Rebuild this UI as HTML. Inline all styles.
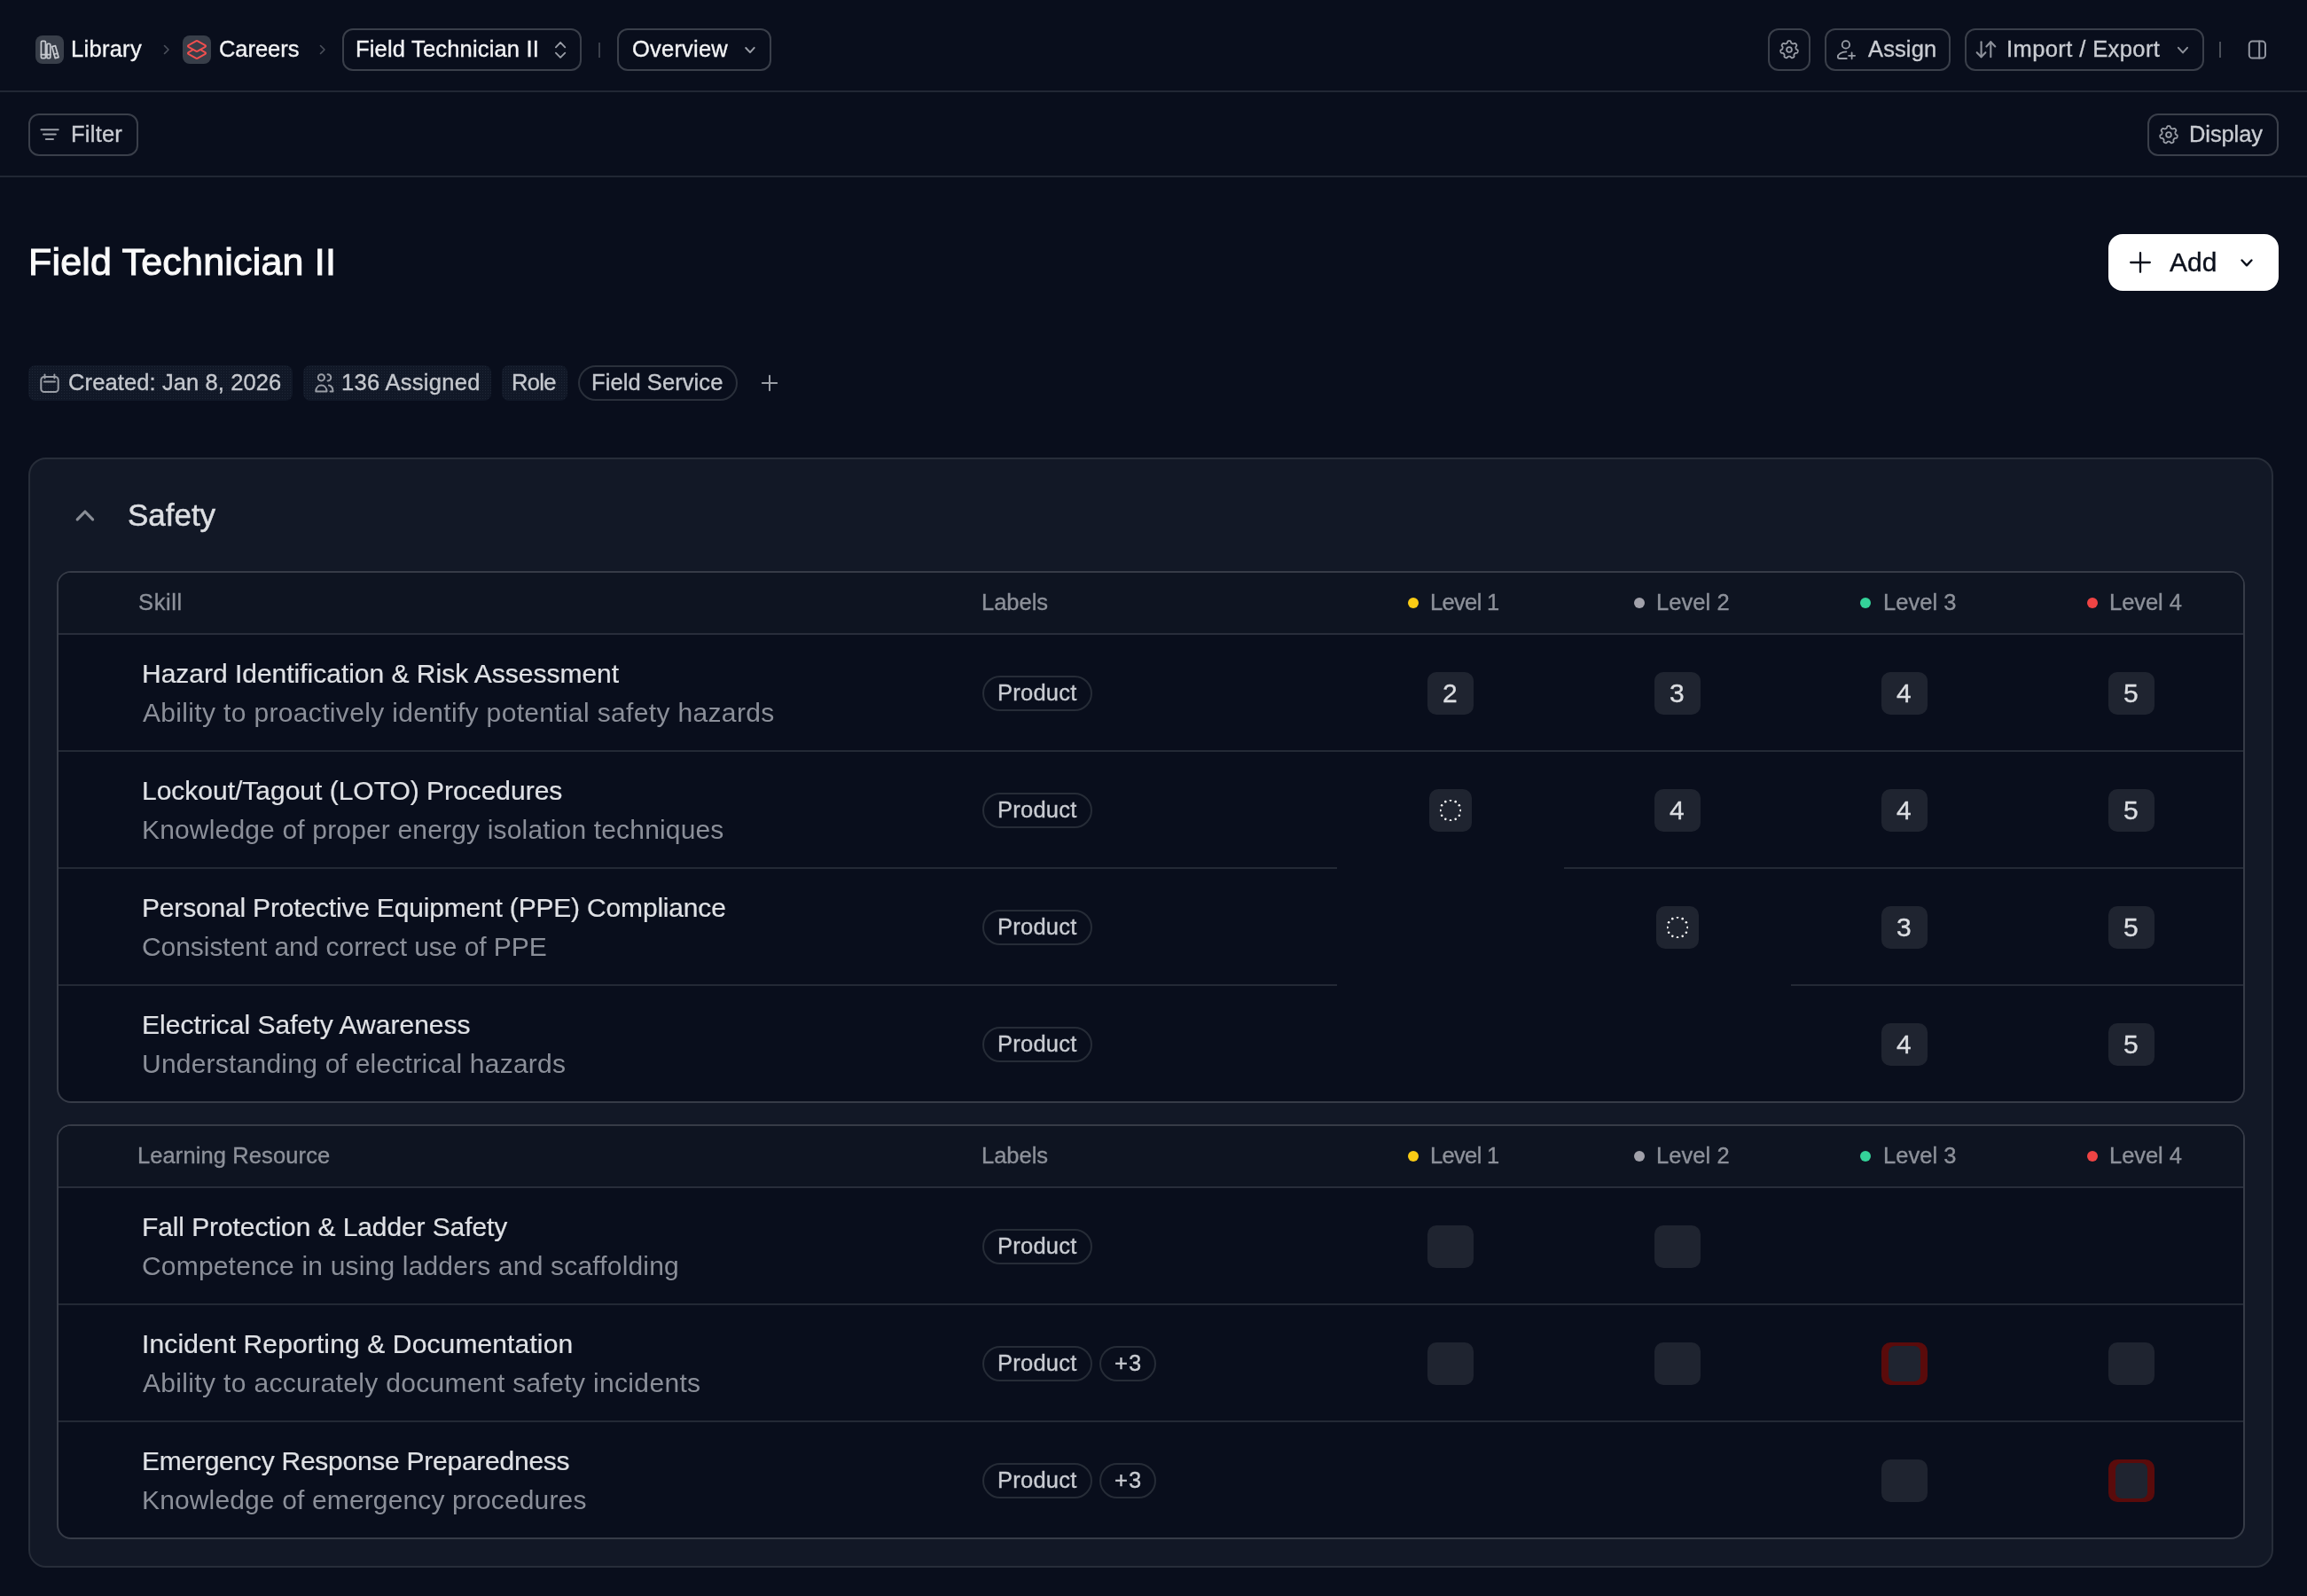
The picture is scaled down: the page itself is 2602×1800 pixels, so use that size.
<!DOCTYPE html>
<html><head><meta charset="utf-8"><title>Field Technician II</title>
<style>
html,body{margin:0;padding:0;}
body{width:2602px;height:1800px;background:#090e1c;position:relative;overflow:hidden;font-family:"Liberation Sans", sans-serif;}
.t{position:absolute;white-space:nowrap;line-height:1;will-change:transform;}
.b{position:absolute;}
@media (max-width: 1400px) and (min-resolution: 1.5dppx) { html{zoom:0.5;} }
</style></head><body>
<div class="b" style="left:0px;top:102px;width:2602px;height:2px;background:#212734"></div>
<div class="b" style="left:40px;top:40px;width:32px;height:32px;background:#383e49;border-radius:8px"></div>
<svg class="b" style="left:40px;top:40px;" width="32" height="32" viewBox="0 0 32 32" fill="none" stroke="#c6c9cf" stroke-width="1.7" stroke-linecap="round" stroke-linejoin="round"><rect x="6.4" y="6.4" width="5" height="19.2" rx="1.2"/><rect x="12.9" y="9.4" width="3.9" height="16.2" rx="1.2"/><path d="M18.6 12.6 L22.4 11.6 L26 24.6 L22.2 25.6 Z"/><path d="M6.4 21.6h5M12.9 21.6h3.9M20.8 21.2l4-1"/></svg>
<div class="t" style="left:80.3px;top:43.00px;letter-spacing:0.283px;font-size:25.5px;color:#f2f3f5;-webkit-text-stroke:0.35px #f2f3f5;">Library</div>
<svg class="b" style="left:180px;top:48px;" width="16" height="16" viewBox="0 0 16 16" fill="none" stroke="#4b505b" stroke-width="1.6" stroke-linecap="round" stroke-linejoin="round"><path d="m5.5 3.5 4.5 4.5-4.5 4.5"/></svg>
<div class="b" style="left:206px;top:40px;width:32px;height:32px;background:#383e49;border-radius:8px"></div>
<svg class="b" style="left:210px;top:44px;" width="24" height="24" viewBox="0 0 24 24" fill="none" stroke="#f04f4f" stroke-width="2" stroke-linecap="round" stroke-linejoin="round"><path d="m16.02 12 5.48 3.13a1 1 0 0 1 0 1.74L13 21.74a2 2 0 0 1-2 0l-8.5-4.87a1 1 0 0 1 0-1.74L7.98 12"/><path d="M13 13.74a2 2 0 0 1-2 0L2.5 8.87a1 1 0 0 1 0-1.74L11 2.26a2 2 0 0 1 2 0l8.5 4.87a1 1 0 0 1 0 1.74Z"/></svg>
<div class="t" style="left:246.7px;top:43.00px;letter-spacing:-0.05px;font-size:25.5px;color:#f2f3f5;-webkit-text-stroke:0.35px #f2f3f5;">Careers</div>
<svg class="b" style="left:356px;top:48px;" width="16" height="16" viewBox="0 0 16 16" fill="none" stroke="#4b505b" stroke-width="1.6" stroke-linecap="round" stroke-linejoin="round"><path d="m5.5 3.5 4.5 4.5-4.5 4.5"/></svg>
<div class="b" style="left:386px;top:32px;width:270px;height:48px;border:2px solid #3a3f4a;border-radius:12px;box-sizing:border-box"></div>
<div class="t" style="left:401.3px;top:43.00px;letter-spacing:0.178px;font-size:25.5px;color:#f2f3f5;-webkit-text-stroke:0.35px #f2f3f5;">Field Technician II</div>
<svg class="b" style="left:620px;top:44px;" width="24" height="24" viewBox="0 0 24 24" fill="none" stroke="#9a9ea7" stroke-width="1.8" stroke-linecap="round" stroke-linejoin="round"><path d="M6.9 9.3 12.1 3.8 17.3 9.3"/><path d="M6.9 15.6 12.1 20.8 17.3 15.6"/></svg>
<div class="b" style="left:675px;top:48px;width:2px;height:17px;background:#3a3f4a"></div>
<div class="b" style="left:696px;top:32px;width:174px;height:48px;border:2px solid #3a3f4a;border-radius:12px;box-sizing:border-box"></div>
<div class="t" style="left:712.5px;top:43.00px;letter-spacing:0.214px;font-size:25.5px;color:#f2f3f5;-webkit-text-stroke:0.35px #f2f3f5;">Overview</div>
<svg class="b" style="left:836px;top:44px;" width="24" height="24" viewBox="0 0 24 24" fill="none" stroke="#9a9ea7" stroke-width="2" stroke-linecap="round" stroke-linejoin="round"><path d="M5.2 10 10 15.1 14.7 9.9"/></svg>
<div class="b" style="left:1994px;top:32px;width:48px;height:48px;border:2px solid #3a3f4a;border-radius:12px;box-sizing:border-box"></div>
<svg class="b" style="left:0;top:0" width="2602" height="1800" fill="none" stroke="#9a9ea7" stroke-width="1.8" stroke-linejoin="round"><path d="M2026.80 56.00 L2027.17 56.21 L2027.46 56.42 L2027.64 56.65 L2027.73 56.88 L2027.77 57.10 L2027.78 57.32 L2027.76 57.55 L2027.73 57.77 L2027.70 57.99 L2027.65 58.20 L2027.60 58.42 L2027.54 58.63 L2027.47 58.84 L2027.38 59.05 L2027.28 59.25 L2027.15 59.43 L2026.96 59.60 L2026.70 59.72 L2026.35 59.79 L2025.93 59.82 L2025.51 59.83 L2025.16 59.85 L2024.91 59.92 L2024.72 60.02 L2024.58 60.13 L2024.46 60.26 L2024.34 60.39 L2024.23 60.53 L2024.13 60.67 L2024.02 60.80 L2023.91 60.94 L2023.80 61.07 L2023.70 61.21 L2023.59 61.35 L2023.49 61.49 L2023.41 61.66 L2023.36 61.86 L2023.35 62.12 L2023.40 62.47 L2023.49 62.88 L2023.56 63.30 L2023.56 63.66 L2023.50 63.94 L2023.38 64.15 L2023.23 64.32 L2023.06 64.47 L2022.88 64.60 L2022.69 64.71 L2022.49 64.82 L2022.30 64.92 L2022.09 65.01 L2021.89 65.10 L2021.68 65.17 L2021.47 65.24 L2021.25 65.28 L2021.02 65.29 L2020.78 65.25 L2020.52 65.13 L2020.24 64.90 L2019.96 64.58 L2019.69 64.26 L2019.45 64.00 L2019.24 63.84 L2019.05 63.76 L2018.87 63.72 L2018.69 63.70 L2018.52 63.70 L2018.35 63.70 L2018.17 63.70 L2018.00 63.70 L2017.83 63.70 L2017.65 63.70 L2017.48 63.70 L2017.31 63.70 L2017.13 63.72 L2016.95 63.76 L2016.76 63.84 L2016.55 64.00 L2016.31 64.26 L2016.04 64.58 L2015.76 64.90 L2015.48 65.13 L2015.22 65.25 L2014.98 65.29 L2014.75 65.28 L2014.53 65.24 L2014.32 65.17 L2014.11 65.10 L2013.91 65.01 L2013.70 64.92 L2013.51 64.82 L2013.31 64.71 L2013.12 64.60 L2012.94 64.47 L2012.77 64.32 L2012.62 64.15 L2012.50 63.94 L2012.44 63.66 L2012.44 63.30 L2012.51 62.88 L2012.60 62.47 L2012.65 62.12 L2012.64 61.86 L2012.59 61.66 L2012.51 61.49 L2012.41 61.35 L2012.30 61.21 L2012.20 61.07 L2012.09 60.94 L2011.98 60.80 L2011.87 60.67 L2011.77 60.53 L2011.66 60.39 L2011.54 60.26 L2011.42 60.13 L2011.28 60.02 L2011.09 59.92 L2010.84 59.85 L2010.49 59.83 L2010.07 59.82 L2009.65 59.79 L2009.30 59.72 L2009.04 59.60 L2008.85 59.43 L2008.72 59.25 L2008.62 59.05 L2008.53 58.84 L2008.46 58.63 L2008.40 58.42 L2008.35 58.20 L2008.30 57.99 L2008.27 57.77 L2008.24 57.55 L2008.22 57.32 L2008.23 57.10 L2008.27 56.88 L2008.36 56.65 L2008.54 56.42 L2008.83 56.21 L2009.20 56.00 L2009.58 55.81 L2009.87 55.64 L2010.08 55.47 L2010.20 55.30 L2010.28 55.13 L2010.33 54.96 L2010.38 54.79 L2010.42 54.62 L2010.46 54.46 L2010.49 54.29 L2010.53 54.12 L2010.57 53.95 L2010.61 53.78 L2010.64 53.61 L2010.67 53.43 L2010.67 53.25 L2010.63 53.04 L2010.52 52.80 L2010.33 52.52 L2010.07 52.18 L2009.83 51.84 L2009.66 51.51 L2009.60 51.23 L2009.61 50.99 L2009.68 50.77 L2009.77 50.57 L2009.88 50.37 L2010.00 50.18 L2010.12 50.00 L2010.26 49.83 L2010.40 49.66 L2010.55 49.49 L2010.70 49.33 L2010.87 49.18 L2011.05 49.05 L2011.25 48.94 L2011.48 48.87 L2011.77 48.87 L2012.12 48.96 L2012.51 49.12 L2012.90 49.30 L2013.22 49.42 L2013.48 49.47 L2013.69 49.46 L2013.87 49.42 L2014.03 49.36 L2014.19 49.29 L2014.35 49.21 L2014.50 49.14 L2014.66 49.06 L2014.81 48.99 L2014.97 48.91 L2015.13 48.84 L2015.28 48.76 L2015.43 48.67 L2015.58 48.55 L2015.72 48.39 L2015.84 48.16 L2015.94 47.83 L2016.04 47.42 L2016.16 47.01 L2016.31 46.69 L2016.49 46.46 L2016.69 46.32 L2016.90 46.23 L2017.12 46.17 L2017.34 46.14 L2017.56 46.12 L2017.78 46.10 L2018.00 46.10 L2018.22 46.10 L2018.44 46.12 L2018.66 46.14 L2018.88 46.17 L2019.10 46.23 L2019.31 46.32 L2019.51 46.46 L2019.69 46.69 L2019.84 47.01 L2019.96 47.42 L2020.06 47.83 L2020.16 48.16 L2020.28 48.39 L2020.42 48.55 L2020.57 48.67 L2020.72 48.76 L2020.87 48.84 L2021.03 48.91 L2021.19 48.99 L2021.34 49.06 L2021.50 49.14 L2021.65 49.21 L2021.81 49.29 L2021.97 49.36 L2022.13 49.42 L2022.31 49.46 L2022.52 49.47 L2022.78 49.42 L2023.10 49.30 L2023.49 49.12 L2023.88 48.96 L2024.23 48.87 L2024.52 48.87 L2024.75 48.94 L2024.95 49.05 L2025.13 49.18 L2025.30 49.33 L2025.45 49.49 L2025.60 49.66 L2025.74 49.83 L2025.88 50.00 L2026.00 50.18 L2026.12 50.37 L2026.23 50.57 L2026.32 50.77 L2026.39 50.99 L2026.40 51.23 L2026.34 51.51 L2026.17 51.84 L2025.93 52.18 L2025.67 52.52 L2025.48 52.80 L2025.37 53.04 L2025.33 53.25 L2025.33 53.43 L2025.36 53.61 L2025.39 53.78 L2025.43 53.95 L2025.47 54.12 L2025.51 54.29 L2025.54 54.46 L2025.58 54.62 L2025.62 54.79 L2025.67 54.96 L2025.72 55.13 L2025.80 55.30 L2025.92 55.47 L2026.13 55.64 L2026.42 55.81 L2026.80 56.00Z"/><circle cx="2018" cy="56" r="2.9"/></svg>
<div class="b" style="left:2058px;top:32px;width:142px;height:48px;border:2px solid #3a3f4a;border-radius:12px;box-sizing:border-box"></div>
<svg class="b" style="left:2070px;top:44px;" width="24" height="24" viewBox="0 0 24 24" fill="none" stroke="#9a9ea7" stroke-width="1.8" stroke-linecap="round" stroke-linejoin="round"><circle cx="11.9" cy="6.4" r="4.2"/><path d="M12.4 14.4C6.8 14.4 2.8 17.4 2.8 20C2.8 21.3 3.6 22 5 22L12.8 22"/><path d="M18.6 15.3v7M15.1 18.8h7"/></svg>
<div class="t" style="left:2107.2px;top:43.00px;letter-spacing:0.12px;font-size:25.5px;color:#c9ccd2;-webkit-text-stroke:0.35px #c9ccd2;">Assign</div>
<div class="b" style="left:2216px;top:32px;width:270px;height:48px;border:2px solid #3a3f4a;border-radius:12px;box-sizing:border-box"></div>
<svg class="b" style="left:2222px;top:40px;" width="32" height="32" viewBox="0 0 32 32" fill="none" stroke="#8e929b" stroke-width="2.1" stroke-linecap="round" stroke-linejoin="round"><path d="M7.7 19.2 12.6 24.3 17.4 19.2"/><path d="M12.6 24.3V7.2"/><path d="M18.4 12.4 23.3 7.3 28.3 12.4"/><path d="M23.3 7.3V24.3"/></svg>
<div class="t" style="left:2263.3px;top:43.00px;letter-spacing:0.407px;font-size:25.5px;color:#c9ccd2;-webkit-text-stroke:0.35px #c9ccd2;">Import / Export</div>
<svg class="b" style="left:2440px;top:40px;" width="32" height="32" viewBox="0 0 32 32" fill="none" stroke="#8e929b" stroke-width="2" stroke-linecap="round" stroke-linejoin="round"><path d="M16.9 13.8 22 19.4 27 13.8"/></svg>
<div class="b" style="left:2503px;top:47px;width:2px;height:18px;background:#4a4f59"></div>
<svg class="b" style="left:2530px;top:40px;" width="32" height="32" viewBox="0 0 32 32" fill="none" stroke="#9296a0" stroke-width="2" stroke-linecap="round" stroke-linejoin="round"><rect x="6.8" y="6.6" width="18.2" height="18.9" rx="3.6"/><path d="M18.2 6.6v18.9"/></svg>
<div class="b" style="left:0px;top:198px;width:2602px;height:2px;background:#212734"></div>
<div class="b" style="left:32px;top:128px;width:124px;height:48px;border:2px solid #3a3f4a;border-radius:12px;box-sizing:border-box"></div>
<svg class="b" style="left:40px;top:136px;" width="32" height="32" viewBox="0 0 32 32" fill="none" stroke="#9a9ea6" stroke-width="2" stroke-linecap="round" stroke-linejoin="round"><path d="M6.4 10.3h19.3"/><path d="M9 15.6h13.8"/><path d="M11.8 21h8.2"/></svg>
<div class="t" style="left:80.4px;top:139.00px;letter-spacing:0.24px;font-size:25.5px;color:#c9ccd2;-webkit-text-stroke:0.35px #c9ccd2;">Filter</div>
<div class="b" style="left:2422px;top:128px;width:148px;height:48px;border:2px solid #3a3f4a;border-radius:12px;box-sizing:border-box"></div>
<svg class="b" style="left:0;top:0" width="2602" height="1800" fill="none" stroke="#9a9ea7" stroke-width="1.8" stroke-linejoin="round"><path d="M2454.80 152.00 L2455.17 152.21 L2455.46 152.42 L2455.64 152.65 L2455.73 152.88 L2455.77 153.10 L2455.78 153.32 L2455.76 153.55 L2455.73 153.77 L2455.70 153.99 L2455.65 154.20 L2455.60 154.42 L2455.54 154.63 L2455.47 154.84 L2455.38 155.05 L2455.28 155.25 L2455.15 155.43 L2454.96 155.60 L2454.70 155.72 L2454.35 155.79 L2453.93 155.82 L2453.51 155.83 L2453.16 155.85 L2452.91 155.92 L2452.72 156.02 L2452.58 156.13 L2452.46 156.26 L2452.34 156.39 L2452.23 156.53 L2452.13 156.67 L2452.02 156.80 L2451.91 156.94 L2451.80 157.07 L2451.70 157.21 L2451.59 157.35 L2451.49 157.49 L2451.41 157.66 L2451.36 157.86 L2451.35 158.12 L2451.40 158.47 L2451.49 158.88 L2451.56 159.30 L2451.56 159.66 L2451.50 159.94 L2451.38 160.15 L2451.23 160.32 L2451.06 160.47 L2450.88 160.60 L2450.69 160.71 L2450.49 160.82 L2450.30 160.92 L2450.09 161.01 L2449.89 161.10 L2449.68 161.17 L2449.47 161.24 L2449.25 161.28 L2449.02 161.29 L2448.78 161.25 L2448.52 161.13 L2448.24 160.90 L2447.96 160.58 L2447.69 160.26 L2447.45 160.00 L2447.24 159.84 L2447.05 159.76 L2446.87 159.72 L2446.69 159.70 L2446.52 159.70 L2446.35 159.70 L2446.17 159.70 L2446.00 159.70 L2445.83 159.70 L2445.65 159.70 L2445.48 159.70 L2445.31 159.70 L2445.13 159.72 L2444.95 159.76 L2444.76 159.84 L2444.55 160.00 L2444.31 160.26 L2444.04 160.58 L2443.76 160.90 L2443.48 161.13 L2443.22 161.25 L2442.98 161.29 L2442.75 161.28 L2442.53 161.24 L2442.32 161.17 L2442.11 161.10 L2441.91 161.01 L2441.70 160.92 L2441.51 160.82 L2441.31 160.71 L2441.12 160.60 L2440.94 160.47 L2440.77 160.32 L2440.62 160.15 L2440.50 159.94 L2440.44 159.66 L2440.44 159.30 L2440.51 158.88 L2440.60 158.47 L2440.65 158.12 L2440.64 157.86 L2440.59 157.66 L2440.51 157.49 L2440.41 157.35 L2440.30 157.21 L2440.20 157.07 L2440.09 156.94 L2439.98 156.80 L2439.87 156.67 L2439.77 156.53 L2439.66 156.39 L2439.54 156.26 L2439.42 156.13 L2439.28 156.02 L2439.09 155.92 L2438.84 155.85 L2438.49 155.83 L2438.07 155.82 L2437.65 155.79 L2437.30 155.72 L2437.04 155.60 L2436.85 155.43 L2436.72 155.25 L2436.62 155.05 L2436.53 154.84 L2436.46 154.63 L2436.40 154.42 L2436.35 154.20 L2436.30 153.99 L2436.27 153.77 L2436.24 153.55 L2436.22 153.32 L2436.23 153.10 L2436.27 152.88 L2436.36 152.65 L2436.54 152.42 L2436.83 152.21 L2437.20 152.00 L2437.58 151.81 L2437.87 151.64 L2438.08 151.47 L2438.20 151.30 L2438.28 151.13 L2438.33 150.96 L2438.38 150.79 L2438.42 150.62 L2438.46 150.46 L2438.49 150.29 L2438.53 150.12 L2438.57 149.95 L2438.61 149.78 L2438.64 149.61 L2438.67 149.43 L2438.67 149.25 L2438.63 149.04 L2438.52 148.80 L2438.33 148.52 L2438.07 148.18 L2437.83 147.84 L2437.66 147.51 L2437.60 147.23 L2437.61 146.99 L2437.68 146.77 L2437.77 146.57 L2437.88 146.37 L2438.00 146.18 L2438.12 146.00 L2438.26 145.83 L2438.40 145.66 L2438.55 145.49 L2438.70 145.33 L2438.87 145.18 L2439.05 145.05 L2439.25 144.94 L2439.48 144.87 L2439.77 144.87 L2440.12 144.96 L2440.51 145.12 L2440.90 145.30 L2441.22 145.42 L2441.48 145.47 L2441.69 145.46 L2441.87 145.42 L2442.03 145.36 L2442.19 145.29 L2442.35 145.21 L2442.50 145.14 L2442.66 145.06 L2442.81 144.99 L2442.97 144.91 L2443.13 144.84 L2443.28 144.76 L2443.43 144.67 L2443.58 144.55 L2443.72 144.39 L2443.84 144.16 L2443.94 143.83 L2444.04 143.42 L2444.16 143.01 L2444.31 142.69 L2444.49 142.46 L2444.69 142.32 L2444.90 142.23 L2445.12 142.17 L2445.34 142.14 L2445.56 142.12 L2445.78 142.10 L2446.00 142.10 L2446.22 142.10 L2446.44 142.12 L2446.66 142.14 L2446.88 142.17 L2447.10 142.23 L2447.31 142.32 L2447.51 142.46 L2447.69 142.69 L2447.84 143.01 L2447.96 143.42 L2448.06 143.83 L2448.16 144.16 L2448.28 144.39 L2448.42 144.55 L2448.57 144.67 L2448.72 144.76 L2448.87 144.84 L2449.03 144.91 L2449.19 144.99 L2449.34 145.06 L2449.50 145.14 L2449.65 145.21 L2449.81 145.29 L2449.97 145.36 L2450.13 145.42 L2450.31 145.46 L2450.52 145.47 L2450.78 145.42 L2451.10 145.30 L2451.49 145.12 L2451.88 144.96 L2452.23 144.87 L2452.52 144.87 L2452.75 144.94 L2452.95 145.05 L2453.13 145.18 L2453.30 145.33 L2453.45 145.49 L2453.60 145.66 L2453.74 145.83 L2453.88 146.00 L2454.00 146.18 L2454.12 146.37 L2454.23 146.57 L2454.32 146.77 L2454.39 146.99 L2454.40 147.23 L2454.34 147.51 L2454.17 147.84 L2453.93 148.18 L2453.67 148.52 L2453.48 148.80 L2453.37 149.04 L2453.33 149.25 L2453.33 149.43 L2453.36 149.61 L2453.39 149.78 L2453.43 149.95 L2453.47 150.12 L2453.51 150.29 L2453.54 150.46 L2453.58 150.62 L2453.62 150.79 L2453.67 150.96 L2453.72 151.13 L2453.80 151.30 L2453.92 151.47 L2454.13 151.64 L2454.42 151.81 L2454.80 152.00Z"/><circle cx="2446" cy="152" r="2.9"/></svg>
<div class="t" style="left:2469.4px;top:139.00px;letter-spacing:-0.1px;font-size:25.5px;color:#c9ccd2;-webkit-text-stroke:0.35px #c9ccd2;">Display</div>
<div class="t" style="left:31.5px;top:274.00px;letter-spacing:0.194px;font-size:43px;color:#fafafa;-webkit-text-stroke:1px #fafafa;">Field Technician II</div>
<div class="b" style="left:2378px;top:264px;width:192px;height:64px;background:#ffffff;border-radius:16px"></div>
<svg class="b" style="left:2402px;top:284px;" width="24" height="24" viewBox="0 0 24 24" fill="none" stroke="#0b101c" stroke-width="2.3" stroke-linecap="round" stroke-linejoin="round"><path d="M12 1.2v21.6M1.2 12h21.6"/></svg>
<div class="t" style="left:2446.5px;top:281.00px;letter-spacing:0.0px;font-size:30px;color:#0b101c;-webkit-text-stroke:0.35px #0b101c;">Add</div>
<svg class="b" style="left:2518px;top:281px;" width="32" height="32" viewBox="0 0 32 32" fill="none" stroke="#0b101c" stroke-width="2.4" stroke-linecap="round" stroke-linejoin="round"><path d="M10.5 12.5 16 18.3 21.5 12.5"/></svg>
<div class="b" style="left:32px;top:412px;width:298px;height:40px;background:#111827;background-image:radial-gradient(circle at 1.5px 1.5px, rgba(160,170,190,0.10) 0.6px, transparent 0.9px);background-size:3px 3px;border-radius:8px"></div>
<svg class="b" style="left:40px;top:416px;" width="32" height="32" viewBox="0 0 32 32" fill="none" stroke="#9a9ea6" stroke-width="2" stroke-linecap="round" stroke-linejoin="round"><rect x="6.3" y="9" width="19.4" height="17" rx="3.5"/><path d="M10.5 6.6v3.8M21.4 6.6v3.8M9.9 14.4h12.1"/></svg>
<div class="t" style="left:77.0px;top:419.00px;letter-spacing:0.111px;font-size:25.5px;color:#c5c8ce;-webkit-text-stroke:0.35px #c5c8ce;">Created: Jan 8, 2026</div>
<div class="b" style="left:342px;top:412px;width:212px;height:40px;background:#111827;background-image:radial-gradient(circle at 1.5px 1.5px, rgba(160,170,190,0.10) 0.6px, transparent 0.9px);background-size:3px 3px;border-radius:8px"></div>
<svg class="b" style="left:350px;top:416px;" width="32" height="32" viewBox="0 0 32 32" fill="none" stroke="#9a9ea6" stroke-width="2" stroke-linecap="round" stroke-linejoin="round"><circle cx="12.4" cy="9.8" r="3.6"/><path d="M19.6 6.2a3.6 3.6 0 0 1 0 7.3"/><path d="M6.3 25.5C6.3 21.5 8.8 18.6 12.4 18.6S18.5 21.5 18.5 25.5Z"/><path d="M20.9 18.6C23.6 19.2 25.5 21.6 25.5 25.5H22.5"/></svg>
<div class="t" style="left:385.3px;top:419.00px;letter-spacing:0.291px;font-size:25.5px;color:#c5c8ce;-webkit-text-stroke:0.35px #c5c8ce;">136 Assigned</div>
<div class="b" style="left:566px;top:412px;width:74px;height:40px;background:#111827;background-image:radial-gradient(circle at 1.5px 1.5px, rgba(160,170,190,0.10) 0.6px, transparent 0.9px);background-size:3px 3px;border-radius:8px"></div>
<div class="t" style="left:577.0px;top:419.00px;letter-spacing:-0.667px;font-size:25.5px;color:#c5c8ce;-webkit-text-stroke:0.35px #c5c8ce;">Role</div>
<div class="b" style="left:652px;top:412px;width:180px;height:40px;border:2px solid #2a303b;border-radius:20px;box-sizing:border-box"></div>
<div class="t" style="left:667.0px;top:419.00px;letter-spacing:0.083px;font-size:25.5px;color:#c5c8ce;-webkit-text-stroke:0.35px #c5c8ce;">Field Service</div>
<svg class="b" style="left:852px;top:416px;" width="32" height="32" viewBox="0 0 32 32" fill="none" stroke="#9a9ea6" stroke-width="2" stroke-linecap="round" stroke-linejoin="round"><path d="M16 7.8v16.4M7.8 16h16.4"/></svg>
<div class="b" style="left:32px;top:516px;width:2532px;height:1252px;background:#121826;border:2px solid #272d39;border-radius:20px;box-sizing:border-box"></div>
<svg class="b" style="left:78px;top:565px;" width="32" height="32" viewBox="0 0 32 32" fill="none" stroke="#8a8e97" stroke-width="3.2" stroke-linecap="round" stroke-linejoin="round"><path d="M9.2 20.8 17.9 12 26.6 20.8"/></svg>
<div class="t" style="left:144.0px;top:563.00px;letter-spacing:-0.02px;font-size:35px;color:#dcdee2;-webkit-text-stroke:0.55px #dcdee2;">Safety</div>
<div class="b" style="left:64px;top:644px;width:2468px;height:600px;background:#090e1c;border:2px solid #363b47;border-radius:16px;box-sizing:border-box;overflow:hidden"></div>
<div class="b" style="left:66px;top:646px;width:2464px;height:68px;background:#0e1421;border-radius:14px 14px 0 0"></div>
<div class="b" style="left:66px;top:714px;width:2464px;height:2px;background:#282d3a"></div>
<div class="t" style="left:155.7px;top:667.00px;letter-spacing:0.625px;font-size:25.5px;color:#8d919a;-webkit-text-stroke:0.35px #8d919a;">Skill</div>
<div class="t" style="left:1107.3px;top:667.00px;letter-spacing:-0.02px;font-size:25.5px;color:#8d919a;-webkit-text-stroke:0.35px #8d919a;">Labels</div>
<div class="b" style="left:1588px;top:674px;width:12px;height:12px;background:#facc15;border-radius:50%"></div>
<div class="t" style="left:1613.3px;top:667.00px;letter-spacing:-0.667px;font-size:25.5px;color:#8d919a;-webkit-text-stroke:0.35px #8d919a;">Level 1</div>
<div class="b" style="left:1843px;top:674px;width:12px;height:12px;background:#a1a1aa;border-radius:50%"></div>
<div class="t" style="left:1868.2px;top:667.00px;letter-spacing:0.067px;font-size:25.5px;color:#8d919a;-webkit-text-stroke:0.35px #8d919a;">Level 2</div>
<div class="b" style="left:2098px;top:674px;width:12px;height:12px;background:#34d399;border-radius:50%"></div>
<div class="t" style="left:2123.6px;top:667.00px;letter-spacing:0.05px;font-size:25.5px;color:#8d919a;-webkit-text-stroke:0.35px #8d919a;">Level 3</div>
<div class="b" style="left:2354px;top:674px;width:12px;height:12px;background:#ef4444;border-radius:50%"></div>
<div class="t" style="left:2379.3px;top:667.00px;letter-spacing:-0.05px;font-size:25.5px;color:#8d919a;-webkit-text-stroke:0.35px #8d919a;">Level 4</div>
<div class="t" style="left:159.7px;top:745.00px;letter-spacing:-0.013px;font-size:30px;color:#dfe1e5;-webkit-text-stroke:0.2px #dfe1e5;">Hazard Identification &amp; Risk Assessment</div>
<div class="t" style="left:160.75px;top:789.00px;letter-spacing:0.337px;font-size:30px;color:#8b8f99;">Ability to proactively identify potential safety hazards</div>
<div class="b" style="left:1108px;top:762px;width:124px;height:40px;border:2px solid #262c37;border-radius:20px;box-sizing:border-box"></div>
<div class="t" style="left:1124.5px;top:769.00px;letter-spacing:0.25px;font-size:25.5px;color:#c9ccd2;-webkit-text-stroke:0.35px #c9ccd2;">Product</div>
<div class="b" style="left:1610px;top:758px;width:52px;height:48px;background:#1f2430;border-radius:10px"></div>
<div class="t" style="left:1626.8px;top:767.00px;letter-spacing:0px;font-size:30px;color:#dcdee2;-webkit-text-stroke:0.35px #dcdee2;">2</div>
<div class="b" style="left:1866px;top:758px;width:52px;height:48px;background:#1f2430;border-radius:10px"></div>
<div class="t" style="left:1882.8px;top:767.00px;letter-spacing:0px;font-size:30px;color:#dcdee2;-webkit-text-stroke:0.35px #dcdee2;">3</div>
<div class="b" style="left:2122px;top:758px;width:52px;height:48px;background:#1f2430;border-radius:10px"></div>
<div class="t" style="left:2138.8px;top:767.00px;letter-spacing:0px;font-size:30px;color:#dcdee2;-webkit-text-stroke:0.35px #dcdee2;">4</div>
<div class="b" style="left:2378px;top:758px;width:52px;height:48px;background:#1f2430;border-radius:10px"></div>
<div class="t" style="left:2394.8px;top:767.00px;letter-spacing:0px;font-size:30px;color:#dcdee2;-webkit-text-stroke:0.35px #dcdee2;">5</div>
<div class="b" style="left:66px;top:846px;width:2464px;height:2px;background:#232935"></div>
<div class="t" style="left:159.7px;top:877.00px;letter-spacing:-0.01px;font-size:30px;color:#dfe1e5;-webkit-text-stroke:0.2px #dfe1e5;">Lockout/Tagout (LOTO) Procedures</div>
<div class="t" style="left:159.8px;top:921.00px;letter-spacing:0.165px;font-size:30px;color:#8b8f99;">Knowledge of proper energy isolation techniques</div>
<div class="b" style="left:1108px;top:894px;width:124px;height:40px;border:2px solid #262c37;border-radius:20px;box-sizing:border-box"></div>
<div class="t" style="left:1124.5px;top:901.00px;letter-spacing:0.25px;font-size:25.5px;color:#c9ccd2;-webkit-text-stroke:0.35px #c9ccd2;">Product</div>
<div class="b" style="left:1612px;top:890px;width:48px;height:48px;background:#1f2430;border-radius:10px"></div>
<svg class="b" style="left:1624px;top:902px" width="24" height="24" viewBox="0 0 24 24"><circle cx="23.40" cy="12.00" r="1.3" fill="#f5f5f5"/><circle cx="21.87" cy="17.70" r="1.3" fill="#f5f5f5"/><circle cx="17.70" cy="21.87" r="1.3" fill="#f5f5f5"/><circle cx="12.00" cy="23.40" r="1.3" fill="#f5f5f5"/><circle cx="6.30" cy="21.87" r="1.3" fill="#f5f5f5"/><circle cx="2.13" cy="17.70" r="1.3" fill="#f5f5f5"/><circle cx="0.60" cy="12.00" r="1.3" fill="#f5f5f5"/><circle cx="2.13" cy="6.30" r="1.3" fill="#f5f5f5"/><circle cx="6.30" cy="2.13" r="1.3" fill="#f5f5f5"/><circle cx="12.00" cy="0.60" r="1.3" fill="#f5f5f5"/><circle cx="17.70" cy="2.13" r="1.3" fill="#f5f5f5"/><circle cx="21.87" cy="6.30" r="1.3" fill="#f5f5f5"/></svg>
<div class="b" style="left:1866px;top:890px;width:52px;height:48px;background:#1f2430;border-radius:10px"></div>
<div class="t" style="left:1882.8px;top:899.00px;letter-spacing:0px;font-size:30px;color:#dcdee2;-webkit-text-stroke:0.35px #dcdee2;">4</div>
<div class="b" style="left:2122px;top:890px;width:52px;height:48px;background:#1f2430;border-radius:10px"></div>
<div class="t" style="left:2138.8px;top:899.00px;letter-spacing:0px;font-size:30px;color:#dcdee2;-webkit-text-stroke:0.35px #dcdee2;">4</div>
<div class="b" style="left:2378px;top:890px;width:52px;height:48px;background:#1f2430;border-radius:10px"></div>
<div class="t" style="left:2394.8px;top:899.00px;letter-spacing:0px;font-size:30px;color:#dcdee2;-webkit-text-stroke:0.35px #dcdee2;">5</div>
<div class="b" style="left:66px;top:978px;width:1442px;height:2px;background:#232935"></div>
<div class="b" style="left:1764px;top:978px;width:766px;height:2px;background:#232935"></div>
<div class="t" style="left:159.7px;top:1009.00px;letter-spacing:-0.18px;font-size:30px;color:#dfe1e5;-webkit-text-stroke:0.2px #dfe1e5;">Personal Protective Equipment (PPE) Compliance</div>
<div class="t" style="left:160.3px;top:1053.00px;letter-spacing:-0.056px;font-size:30px;color:#8b8f99;">Consistent and correct use of PPE</div>
<div class="b" style="left:1108px;top:1026px;width:124px;height:40px;border:2px solid #262c37;border-radius:20px;box-sizing:border-box"></div>
<div class="t" style="left:1124.5px;top:1033.00px;letter-spacing:0.25px;font-size:25.5px;color:#c9ccd2;-webkit-text-stroke:0.35px #c9ccd2;">Product</div>
<div class="b" style="left:1868px;top:1022px;width:48px;height:48px;background:#1f2430;border-radius:10px"></div>
<svg class="b" style="left:1880px;top:1034px" width="24" height="24" viewBox="0 0 24 24"><circle cx="23.40" cy="12.00" r="1.3" fill="#f5f5f5"/><circle cx="21.87" cy="17.70" r="1.3" fill="#f5f5f5"/><circle cx="17.70" cy="21.87" r="1.3" fill="#f5f5f5"/><circle cx="12.00" cy="23.40" r="1.3" fill="#f5f5f5"/><circle cx="6.30" cy="21.87" r="1.3" fill="#f5f5f5"/><circle cx="2.13" cy="17.70" r="1.3" fill="#f5f5f5"/><circle cx="0.60" cy="12.00" r="1.3" fill="#f5f5f5"/><circle cx="2.13" cy="6.30" r="1.3" fill="#f5f5f5"/><circle cx="6.30" cy="2.13" r="1.3" fill="#f5f5f5"/><circle cx="12.00" cy="0.60" r="1.3" fill="#f5f5f5"/><circle cx="17.70" cy="2.13" r="1.3" fill="#f5f5f5"/><circle cx="21.87" cy="6.30" r="1.3" fill="#f5f5f5"/></svg>
<div class="b" style="left:2122px;top:1022px;width:52px;height:48px;background:#1f2430;border-radius:10px"></div>
<div class="t" style="left:2138.8px;top:1031.00px;letter-spacing:0px;font-size:30px;color:#dcdee2;-webkit-text-stroke:0.35px #dcdee2;">3</div>
<div class="b" style="left:2378px;top:1022px;width:52px;height:48px;background:#1f2430;border-radius:10px"></div>
<div class="t" style="left:2394.8px;top:1031.00px;letter-spacing:0px;font-size:30px;color:#dcdee2;-webkit-text-stroke:0.35px #dcdee2;">5</div>
<div class="b" style="left:66px;top:1110px;width:1442px;height:2px;background:#232935"></div>
<div class="b" style="left:2020px;top:1110px;width:510px;height:2px;background:#232935"></div>
<div class="t" style="left:159.7px;top:1141.00px;letter-spacing:0.038px;font-size:30px;color:#dfe1e5;-webkit-text-stroke:0.2px #dfe1e5;">Electrical Safety Awareness</div>
<div class="t" style="left:159.8px;top:1185.00px;letter-spacing:0.226px;font-size:30px;color:#8b8f99;">Understanding of electrical hazards</div>
<div class="b" style="left:1108px;top:1158px;width:124px;height:40px;border:2px solid #262c37;border-radius:20px;box-sizing:border-box"></div>
<div class="t" style="left:1124.5px;top:1165.00px;letter-spacing:0.25px;font-size:25.5px;color:#c9ccd2;-webkit-text-stroke:0.35px #c9ccd2;">Product</div>
<div class="b" style="left:2122px;top:1154px;width:52px;height:48px;background:#1f2430;border-radius:10px"></div>
<div class="t" style="left:2138.8px;top:1163.00px;letter-spacing:0px;font-size:30px;color:#dcdee2;-webkit-text-stroke:0.35px #dcdee2;">4</div>
<div class="b" style="left:2378px;top:1154px;width:52px;height:48px;background:#1f2430;border-radius:10px"></div>
<div class="t" style="left:2394.8px;top:1163.00px;letter-spacing:0px;font-size:30px;color:#dcdee2;-webkit-text-stroke:0.35px #dcdee2;">5</div>
<div class="b" style="left:64px;top:1268px;width:2468px;height:468px;background:#090e1c;border:2px solid #363b47;border-radius:16px;box-sizing:border-box;overflow:hidden"></div>
<div class="b" style="left:66px;top:1270px;width:2464px;height:68px;background:#0e1421;border-radius:14px 14px 0 0"></div>
<div class="b" style="left:66px;top:1338px;width:2464px;height:2px;background:#282d3a"></div>
<div class="t" style="left:155.3px;top:1291.00px;letter-spacing:0.106px;font-size:25.5px;color:#8d919a;-webkit-text-stroke:0.35px #8d919a;">Learning Resource</div>
<div class="t" style="left:1107.3px;top:1291.00px;letter-spacing:-0.02px;font-size:25.5px;color:#8d919a;-webkit-text-stroke:0.35px #8d919a;">Labels</div>
<div class="b" style="left:1588px;top:1298px;width:12px;height:12px;background:#facc15;border-radius:50%"></div>
<div class="t" style="left:1613.3px;top:1291.00px;letter-spacing:-0.667px;font-size:25.5px;color:#8d919a;-webkit-text-stroke:0.35px #8d919a;">Level 1</div>
<div class="b" style="left:1843px;top:1298px;width:12px;height:12px;background:#a1a1aa;border-radius:50%"></div>
<div class="t" style="left:1868.2px;top:1291.00px;letter-spacing:0.067px;font-size:25.5px;color:#8d919a;-webkit-text-stroke:0.35px #8d919a;">Level 2</div>
<div class="b" style="left:2098px;top:1298px;width:12px;height:12px;background:#34d399;border-radius:50%"></div>
<div class="t" style="left:2123.6px;top:1291.00px;letter-spacing:0.05px;font-size:25.5px;color:#8d919a;-webkit-text-stroke:0.35px #8d919a;">Level 3</div>
<div class="b" style="left:2354px;top:1298px;width:12px;height:12px;background:#ef4444;border-radius:50%"></div>
<div class="t" style="left:2379.3px;top:1291.00px;letter-spacing:-0.05px;font-size:25.5px;color:#8d919a;-webkit-text-stroke:0.35px #8d919a;">Level 4</div>
<div class="t" style="left:159.7px;top:1369.00px;letter-spacing:-0.1px;font-size:30px;color:#dfe1e5;-webkit-text-stroke:0.2px #dfe1e5;">Fall Protection &amp; Ladder Safety</div>
<div class="t" style="left:160.3px;top:1413.00px;letter-spacing:0.181px;font-size:30px;color:#8b8f99;">Competence in using ladders and scaffolding</div>
<div class="b" style="left:1108px;top:1386px;width:124px;height:40px;border:2px solid #262c37;border-radius:20px;box-sizing:border-box"></div>
<div class="t" style="left:1124.5px;top:1393.00px;letter-spacing:0.25px;font-size:25.5px;color:#c9ccd2;-webkit-text-stroke:0.35px #c9ccd2;">Product</div>
<div class="b" style="left:1610px;top:1382px;width:52px;height:48px;background:#1f2430;border-radius:10px"></div>
<div class="b" style="left:1866px;top:1382px;width:52px;height:48px;background:#1f2430;border-radius:10px"></div>
<div class="b" style="left:66px;top:1470px;width:2464px;height:2px;background:#232935"></div>
<div class="t" style="left:159.7px;top:1501.00px;letter-spacing:0.127px;font-size:30px;color:#dfe1e5;-webkit-text-stroke:0.2px #dfe1e5;">Incident Reporting &amp; Documentation</div>
<div class="t" style="left:160.75px;top:1545.00px;letter-spacing:0.336px;font-size:30px;color:#8b8f99;">Ability to accurately document safety incidents</div>
<div class="b" style="left:1108px;top:1518px;width:124px;height:40px;border:2px solid #262c37;border-radius:20px;box-sizing:border-box"></div>
<div class="t" style="left:1124.5px;top:1525.00px;letter-spacing:0.25px;font-size:25.5px;color:#c9ccd2;-webkit-text-stroke:0.35px #c9ccd2;">Product</div>
<div class="b" style="left:1240px;top:1518px;width:64px;height:40px;border:2px solid #262c37;border-radius:20px;box-sizing:border-box"></div>
<div class="t" style="left:1257.0px;top:1525.00px;letter-spacing:1.1px;font-size:25.5px;color:#c9ccd2;-webkit-text-stroke:0.35px #c9ccd2;">+3</div>
<div class="b" style="left:1610px;top:1514px;width:52px;height:48px;background:#1f2430;border-radius:10px"></div>
<div class="b" style="left:1866px;top:1514px;width:52px;height:48px;background:#1f2430;border-radius:10px"></div>
<div class="b" style="left:2122px;top:1514px;width:52px;height:48px;background:#5a0b0b;border-radius:10px"></div>
<div class="b" style="left:2130px;top:1518px;width:36px;height:40px;background:#1f2430;border-radius:7px"></div>
<div class="b" style="left:2378px;top:1514px;width:52px;height:48px;background:#1f2430;border-radius:10px"></div>
<div class="b" style="left:66px;top:1602px;width:2464px;height:2px;background:#232935"></div>
<div class="t" style="left:159.7px;top:1633.00px;letter-spacing:-0.257px;font-size:30px;color:#dfe1e5;-webkit-text-stroke:0.2px #dfe1e5;">Emergency Response Preparedness</div>
<div class="t" style="left:159.8px;top:1677.00px;letter-spacing:0.138px;font-size:30px;color:#8b8f99;">Knowledge of emergency procedures</div>
<div class="b" style="left:1108px;top:1650px;width:124px;height:40px;border:2px solid #262c37;border-radius:20px;box-sizing:border-box"></div>
<div class="t" style="left:1124.5px;top:1657.00px;letter-spacing:0.25px;font-size:25.5px;color:#c9ccd2;-webkit-text-stroke:0.35px #c9ccd2;">Product</div>
<div class="b" style="left:1240px;top:1650px;width:64px;height:40px;border:2px solid #262c37;border-radius:20px;box-sizing:border-box"></div>
<div class="t" style="left:1257.0px;top:1657.00px;letter-spacing:1.1px;font-size:25.5px;color:#c9ccd2;-webkit-text-stroke:0.35px #c9ccd2;">+3</div>
<div class="b" style="left:2122px;top:1646px;width:52px;height:48px;background:#1f2430;border-radius:10px"></div>
<div class="b" style="left:2378px;top:1646px;width:52px;height:48px;background:#5a0b0b;border-radius:10px"></div>
<div class="b" style="left:2386px;top:1650px;width:36px;height:40px;background:#1f2430;border-radius:7px"></div>
</body></html>
